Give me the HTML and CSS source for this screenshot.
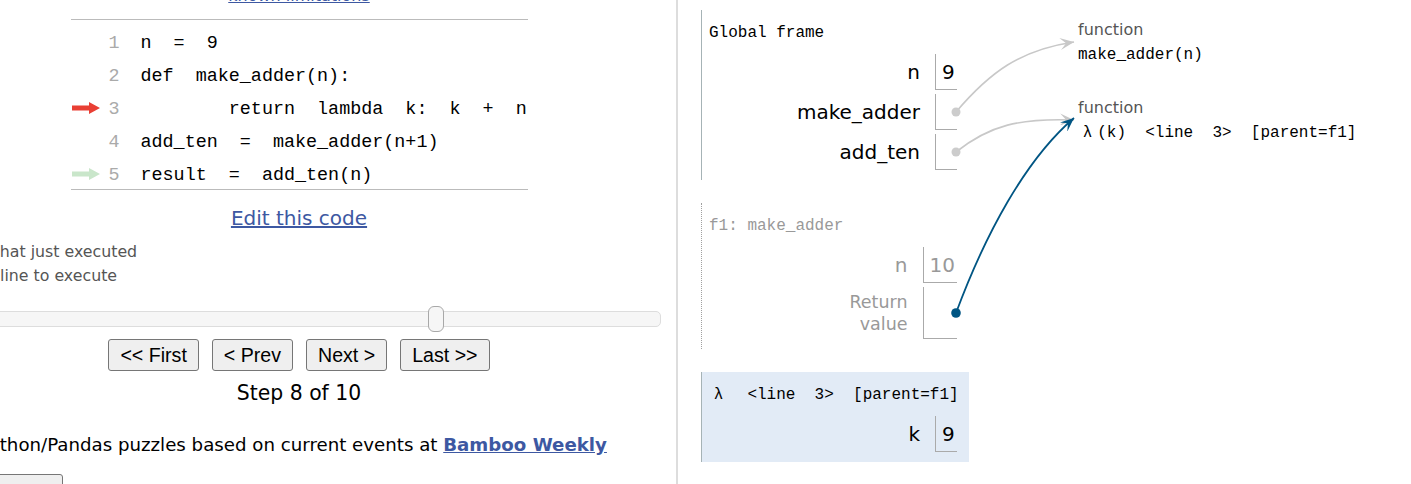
FILE: index.html
```html
<!DOCTYPE html>
<html>
<head>
<meta charset="utf-8">
<title>Python Tutor</title>
<link rel="stylesheet" href="styles.css">
</head>
<body>
<div class="page">
  <div class="left">
    <div class="pane">
      <div class="toplink"><a href="#">known limitations</a></div>
      <div class="code">
        <div class="row"><span class="gut"></span><span class="ln">1</span><span class="src">n  =  9</span></div>
        <div class="row"><span class="gut"></span><span class="ln">2</span><span class="src">def  make_adder(n):</span></div>
        <div class="row"><span class="gut"><svg class="arr" width="28" height="12" viewBox="0 0 28 12"><path d="M0 3.5H17V0L28 6L17 12V8.5H0Z" fill="#e93f34"/></svg></span><span class="ln">3</span><span class="src">        return  lambda  k:  k  +  n</span></div>
        <div class="row"><span class="gut"></span><span class="ln">4</span><span class="src">add_ten  =  make_adder(n+1)</span></div>
        <div class="row"><span class="gut"><svg class="arr" width="28" height="12" viewBox="0 0 28 12"><path d="M0 3.5H17V0L28 6L17 12V8.5H0Z" fill="#c9e6ca"/></svg></span><span class="ln">5</span><span class="src">result  =  add_ten(n)</span></div>
      </div>
      <div class="edit"><a href="#">Edit this code</a></div>
      <div class="legend">
        <div class="leg"><svg class="legarr" width="20" height="10" viewBox="0 0 28 12"><path d="M0 3.5H17V0L28 6L17 12V8.5H0Z" fill="#c9e6ca"/></svg><span>line that just executed</span></div>
        <div class="leg"><svg class="legarr" width="20" height="10" viewBox="0 0 28 12"><path d="M0 3.5H17V0L28 6L17 12V8.5H0Z" fill="#e93f34"/></svg><span>next line to execute</span></div>
      </div>
      <div class="slider"><div class="handle"></div></div>
      <div class="btns">
        <button class="btn">&lt;&lt; First</button>
        <button class="btn">&lt; Prev</button>
        <button class="btn">Next &gt;</button>
        <button class="btn">Last &gt;&gt;</button>
      </div>
      <div class="step">Step 8 of 10</div>
      <div class="promo">Python/Pandas puzzles based on current events at <a href="#">Bamboo Weekly</a></div>
      <button class="btn morebtn"></button>
    </div>
  </div>
  <div class="right">
    <div class="stack">
      <div class="frame">
        <div class="fhead">Global frame</div>
        <div class="vars">
          <div class="vname">n</div><div class="vval">9</div>
          <div class="vname">make_adder</div><div class="vval"></div>
          <div class="vname">add_ten</div><div class="vval"></div>
        </div>
      </div>
      <div class="frame dim">
        <div class="fhead">f1: make_adder</div>
        <div class="vars">
          <div class="vname">n</div><div class="vval">10</div>
          <div class="vname retval">Return<br>value</div><div class="vval tall"></div>
        </div>
      </div>
      <div class="frame hl">
        <div class="fhead"><span class="lam">λ</span>  &lt;line  3&gt;  [parent=f1]</div>
        <div class="vars">
          <div class="vname">k</div><div class="vval">9</div>
        </div>
      </div>
    </div>
    <div class="heap">
      <div class="hobj">
        <div class="typelabel">function</div>
        <div class="fname">make_adder(n)</div>
      </div>
      <div class="hobj">
        <div class="typelabel">function</div>
        <div class="fname"><span class="lam">λ</span>(k)  &lt;line  3&gt;  [parent=f1]</div>
      </div>
    </div>
    <svg class="arrows" width="733" height="484">
      <defs>
        <marker id="hg" markerUnits="userSpaceOnUse" markerWidth="15" markerHeight="12" refX="14" refY="6" orient="auto">
          <path d="M0 0L14 6L0 12L6 6Z" fill="#c8c8c8"/>
        </marker>
        <marker id="hb" markerUnits="userSpaceOnUse" markerWidth="15" markerHeight="12" refX="14" refY="6" orient="auto">
          <path d="M0 0L14 6L0 12L6 6Z" fill="#005583"/>
        </marker>
      </defs>
      <g transform="translate(-678 0)">
        <path d="M956 112C990 72 1020 50 1074 42" fill="none" stroke="#c8c8c8" stroke-width="1.6" marker-end="url(#hg)"/>
        <path d="M956 152C990 125 1020 118 1074 120" fill="none" stroke="#c8c8c8" stroke-width="1.6" marker-end="url(#hg)"/>
        <path d="M956 313C985 235 1025 160 1074 118" fill="none" stroke="#005583" stroke-width="1.8" marker-end="url(#hb)"/>
        <circle cx="956" cy="112" r="4.5" fill="#cccccc"/>
        <circle cx="956" cy="152" r="4.5" fill="#cccccc"/>
        <circle cx="956" cy="313" r="4.8" fill="#005583"/>
      </g>
    </svg>
  </div>
</div>
</body>
</html>
```

FILE: styles.css
```css
html, body {
  margin: 0;
  padding: 0;
  background: #fff;
  overflow: hidden;
}
body {
  font-family: "DejaVu Sans", Verdana, sans-serif;
  color: #000;
}
.page {
  display: flex;
  height: 484px;
  overflow: hidden;
}

/* ---------- left pane ---------- */
.left {
  width: 676px;
  flex: none;
  overflow: hidden;
  border-right: 2px solid #dddddd;
}
.pane {
  width: 724px;
  margin-left: -63px;
  display: flex;
  flex-direction: column;
  align-items: center;
}
.toplink {
  font-size: 16px;
  line-height: 20px;
  height: 20px;
  margin-top: -14px;
}
.toplink a, .edit a, .promo a {
  color: #3d58a2;
}
.code {
  margin-top: 13px;
  width: 457px;
  border-top: 1px solid #bbbbbb;
  border-bottom: 1px solid #bbbbbb;
  padding-top: 4px;
}
.row {
  display: grid;
  grid-template-columns: 38px 32px 1fr;
  height: 33px;
  align-items: center;
  font-family: "Liberation Mono", "DejaVu Sans Mono", monospace;
  font-size: 18.4px;
}
.gut {
  display: flex;
  align-items: center;
  padding-top: 2px;
}
.arr {
  display: block;
  margin-left: 1px;
}
.ln {
  color: #aaaaaa;
  padding-top: 6px;
}
.src {
  white-space: pre;
  color: #000;
  padding-top: 6px;
}
.edit {
  margin-top: 16px;
  font-size: 20px;
  line-height: 24px;
}
.legend {
  align-self: stretch;
  margin-top: 10px;
  font-size: 15.8px;
  line-height: 24px;
  color: #555555;
}
.leg {
  display: flex;
  align-items: center;
  white-space: nowrap;
}
.legarr {
  margin-right: 3px;
}
.slider {
  align-self: stretch;
  margin-top: 23px;
  height: 16px;
  box-sizing: border-box;
  border: 1px solid #dddddd;
  background: #f6f6f6;
  border-radius: 5px;
  position: relative;
}
.handle {
  position: absolute;
  left: 490px;
  top: -6px;
  width: 16px;
  height: 26px;
  box-sizing: border-box;
  border: 1px solid #a8a8a8;
  background: #f6f6f6;
  border-radius: 6px;
}
.btns {
  margin-top: 12px;
  display: flex;
  gap: 13px;
}
.btn {
  height: 32px;
  padding: 0 11px;
  font-family: "Liberation Sans", Arial, sans-serif;
  font-size: 19.6px;
  color: #000;
  background: #efefef;
  border: 1px solid #767676;
  border-radius: 3px;
}
.step {
  margin-top: 10px;
  font-size: 20.4px;
  line-height: 24px;
}
.promo {
  align-self: stretch;
  margin-top: 29px;
  font-size: 18.2px;
  line-height: 22px;
  padding-left: 41px;
  white-space: nowrap;
}
.promo a {
  font-weight: bold;
}
.morebtn {
  align-self: flex-start;
  margin-top: 18px;
  width: 126px;
}

/* ---------- right pane ---------- */
.right {
  position: relative;
  flex: 1;
  display: flex;
  align-items: flex-start;
  padding: 10px 0 0 23px;
}
.stack {
  width: 268px;
  flex: none;
}
.frame {
  margin-bottom: 23px;
  padding: 13px 12px 10px 7px;
  border-left: 1px solid #a6b3b6;
}
.frame.dim {
  border-left: 1px dotted #a0a0a0;
  color: #999999;
}
.frame.hl {
  background: #e2ebf6;
}
.fhead {
  font-family: "Liberation Mono", "DejaVu Sans Mono", monospace;
  font-size: 16px;
  line-height: 20px;
  height: 20px;
  white-space: pre;
}
.lam {
  display: inline-block;
  width: 2ch;
  text-align: center;
}
.vars {
  margin-top: 11px;
  display: grid;
  grid-template-columns: auto auto;
  justify-content: end;
  column-gap: 15px;
  row-gap: 4px;
}
.vname {
  font-size: 20px;
  line-height: 24px;
  text-align: right;
  align-self: center;
}
.vname.retval {
  font-size: 17.5px;
  line-height: 22px;
}
.vval {
  height: 36px;
  min-width: 22px;
  box-sizing: border-box;
  border-left: 1px solid #aaaaaa;
  border-bottom: 1px solid #aaaaaa;
  padding: 0 2px 0 6px;
  font-size: 20px;
  line-height: 36px;
}
.vval.tall {
  height: 52px;
}
.heap {
  margin-left: 109px;
  padding-top: 10px;
}
.hobj + .hobj {
  margin-top: 33px;
}
.typelabel {
  font-size: 16px;
  line-height: 20px;
  color: #555555;
}
.fname {
  margin-top: 5px;
  font-family: "Liberation Mono", "DejaVu Sans Mono", monospace;
  font-size: 16px;
  line-height: 20px;
  white-space: pre;
}
.arrows {
  position: absolute;
  left: 0;
  top: 0;
  pointer-events: none;
  overflow: visible;
}
```
